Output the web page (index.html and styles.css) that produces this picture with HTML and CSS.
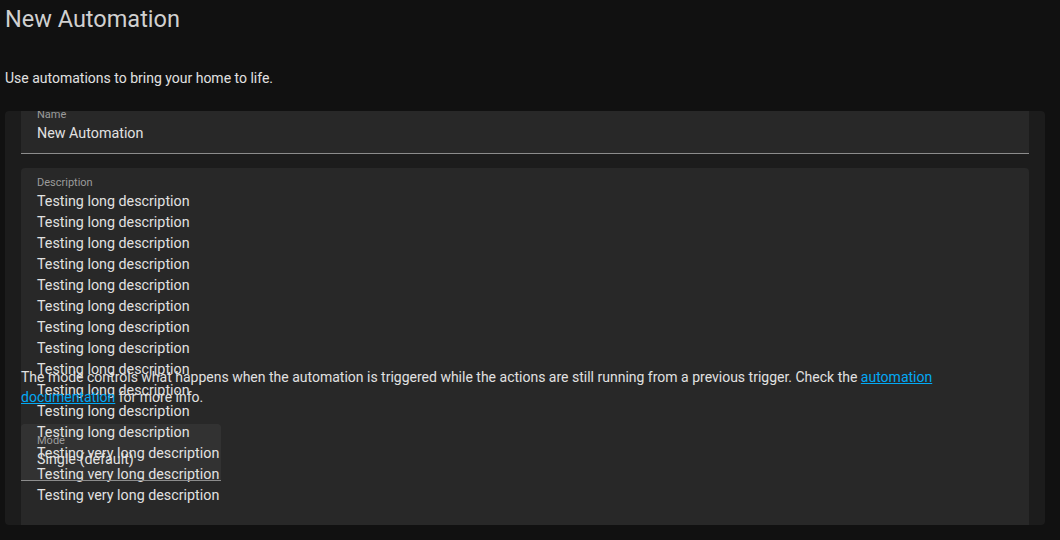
FILE: index.html
```html
<!DOCTYPE html>
<html lang="en">
<head>
<meta charset="utf-8">
<title>New Automation</title>
<link rel="stylesheet" href="styles.css">
</head>
<body>
<div class="page">
  <h1 class="title">New Automation</h1>
  <p class="intro">Use automations to bring your home to life.</p>
  <div class="card">
    <div class="field name-field">
      <span class="field-label">Name</span>
      <div class="field-value">New Automation</div>
    </div>
    <div class="stack">
      <div class="field desc-field">
        <span class="field-label">Description</span>
        <div class="desc-text">Testing long description<br>Testing long description<br>Testing long description<br>Testing long description<br>Testing long description<br>Testing long description<br>Testing long description<br>Testing long description<br>Testing long description<br>Testing long description<br>Testing long description<br>Testing long description<br>Testing very long description<br>Testing very long description<br>Testing very long description</div>
      </div>
      <div class="mode-section">
        <p class="mode-help">The mode controls what happens when the automation is triggered while the actions are still running from a previous trigger. Check the <a href="#" class="link">automation documentation</a> for more info.</p>
        <div class="field select-field">
          <span class="field-label">Mode</span>
          <div class="field-value">Single (default)</div>
        </div>
      </div>
    </div>
  </div>
</div>
</body>
</html>
```
FILE: styles.css
```css
html, body {
  margin: 0;
  padding: 0;
  background: #111111;
}
body {
  font-family: Roboto, "Noto Sans", sans-serif;
  color: #e1e1e1;
}
.page {
  padding: 3px 15px 0 5px;
}
.title {
  margin: 0;
  font-size: 23.5px;
  line-height: 32px;
  font-weight: 400;
  color: #d0d0d0;
}
.intro {
  margin: 33px 0 0;
  font-size: 14px;
  line-height: 20px;
  color: #e1e1e1;
}
.card {
  margin-top: 23px;
  height: 414px;
  background: #1c1c1c;
  border-radius: 4px;
  padding: 0 16px;
  overflow: hidden;
}
.field {
  background: #282828;
  border-radius: 4px 4px 0 0;
  padding: 0 16px;
}
.field-label {
  display: block;
  font-size: 11px;
  line-height: 13px;
  color: #9b9b9b;
}
.field-value {
  font-size: 14.3px;
  line-height: 20px;
  color: #e1e1e1;
  margin-top: 2px;
}
.name-field {
  margin-top: -13px;
  padding-top: 10px;
  padding-bottom: 10px;
  border-bottom: 1px solid #8c8c8c;
}
.stack {
  display: grid;
  margin-top: 14px;
}
.stack > * {
  grid-area: 1 / 1;
}
.desc-field {
  padding-top: 8px;
  padding-bottom: 40px;
}
.desc-text {
  margin-top: 2px;
  font-size: 14.3px;
  line-height: 21px;
  color: #e1e1e1;
}
.mode-section {
  padding-top: 199px;
  align-self: start;
}
.mode-help {
  margin: 0 0 17px;
  font-size: 14px;
  line-height: 20px;
  color: #e1e1e1;
}
.link {
  color: #03a9f4;
  text-decoration: underline;
}
.select-field {
  width: 200px;
  box-sizing: border-box;
  background: rgba(255, 255, 255, 0.05);
  padding-top: 10px;
  padding-bottom: 11px;
  border-bottom: 1px solid #8c8c8c;
}
```
